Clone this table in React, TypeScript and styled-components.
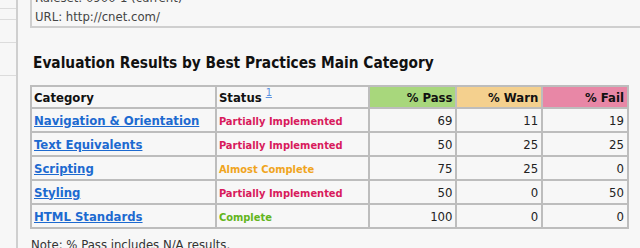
import React from "react";
import styled, { createGlobalStyle } from "styled-components";

const FONT = `"DejaVu Sans Condensed", "DejaVu Sans", "Liberation Sans", sans-serif`;

const GlobalStyle = createGlobalStyle`
  html, body {
    margin: 0;
    padding: 0;
    background: #f7f7f7;
    overflow: hidden;
  }
  body {
    font-family: ${FONT};
    font-size: 13px;
    color: #222;
  }
`;

type Status = "partial" | "almost" | "complete";

interface Row {
  name: string;
  status: Status;
  pass: number;
  warn: number;
  fail: number;
}

const rows: Row[] = [
  { name: "Navigation & Orientation", status: "partial", pass: 69, warn: 11, fail: 19 },
  { name: "Text Equivalents", status: "partial", pass: 50, warn: 25, fail: 25 },
  { name: "Scripting", status: "almost", pass: 75, warn: 25, fail: 0 },
  { name: "Styling", status: "partial", pass: 50, warn: 0, fail: 50 },
  { name: "HTML Standards", status: "complete", pass: 100, warn: 0, fail: 0 },
];

const statusLabel: Record<Status, string> = {
  partial: "Partially Implemented",
  almost: "Almost Complete",
  complete: "Complete",
};

const statusColor: Record<Status, string> = {
  partial: "#d81b5c",
  almost: "#f0a51e",
  complete: "#63b51c",
};

const headColors = {
  pass: "#a8d77c",
  warn: "#f4d08e",
  fail: "#e887a6",
};

/** ===========================================================================
 * Layout
 * ============================================================================
 */

const Page = styled.div`
  display: flex;
  flex-direction: row;
  height: 248px;
  overflow: hidden;
`;

const Sidebar = styled.aside`
  width: 16px;
  flex-shrink: 0;
  border-right: 2px solid #cfcfcf;
  display: flex;
  flex-direction: column;
`;

const SideItem = styled.div<{ $h: number }>`
  height: ${(p) => p.$h}px;
  border-bottom: 1px solid #dcdcdc;
  box-sizing: border-box;
`;

const Main = styled.main`
  flex: 1;
  margin-left: 12px;
  margin-top: -12px;
`;

const InfoBox = styled.div`
  border-left: 2px solid #cfcfcf;
  border-bottom: 2px solid #cfcfcf;
  padding: 0 0 0 3px;
  color: #444;
  line-height: 19px;
`;

const Heading = styled.h2`
  margin: 25px 0 0 3px;
  font-size: 15.3px;
  font-weight: bold;
  color: #111;
  line-height: 20px;
`;

const Table = styled.table`
  margin-top: 12px;
  border-collapse: separate;
  border-spacing: 0;
  border: 1px solid #bdbdbd;
  width: 599px;
`;

const HeadCell = styled.th<{ $bg?: string; $w: number; $right?: boolean }>`
  width: ${(p) => p.$w}px;
  height: 22px;
  padding: 0 3px 0 2px;
  border: 1px solid #bdbdbd;
  background: ${(p) => p.$bg || "transparent"};
  text-align: ${(p) => (p.$right ? "right" : "left")};
  font-size: 13px;
  font-weight: bold;
  color: #111;
  white-space: nowrap;
  box-sizing: border-box;
`;

const Cell = styled.td<{ $right?: boolean }>`
  height: 22px;
  padding: 0 3px 0 2px;
  border: 1px solid #bdbdbd;
  text-align: ${(p) => (p.$right ? "right" : "left")};
  font-size: 13px;
  color: #222;
  white-space: nowrap;
`;

const CategoryLink = styled.a`
  color: #1d6ad0;
  font-weight: bold;
  text-decoration: underline;
`;

const StatusText = styled.span<{ $status: Status }>`
  color: ${(p) => statusColor[p.$status]};
  font-weight: bold;
  font-size: 11px;
`;

const Footnote = styled.sup`
  font-size: 11px;
  font-weight: normal;
  margin-left: 4px;
  line-height: 0;

  a {
    color: #5b92e0;
  }
`;

const Note = styled.p`
  margin: 8px 0 0 1px;
  color: #333;
`;

export default function App() {
  return (
    <>
      <GlobalStyle />
      <Page>
        <Sidebar>
          <SideItem $h={9} />
          <SideItem $h={11} />
          <SideItem $h={23} />
          <SideItem $h={33} />
        </Sidebar>
        <Main>
          <InfoBox>
            <div>Ruleset: 0900-1 (current)</div>
            <div>URL: http://cnet.com/</div>
          </InfoBox>
          <Heading>Evaluation Results by Best Practices Main Category</Heading>
          <Table>
            <thead>
              <tr>
                <HeadCell $w={185}>Category</HeadCell>
                <HeadCell $w={153}>
                  Status
                  <Footnote>
                    <a href="#note1">1</a>
                  </Footnote>
                </HeadCell>
                <HeadCell $w={88} $bg={headColors.pass} $right>
                  % Pass
                </HeadCell>
                <HeadCell $w={86} $bg={headColors.warn} $right>
                  % Warn
                </HeadCell>
                <HeadCell $w={86} $bg={headColors.fail} $right>
                  % Fail
                </HeadCell>
              </tr>
            </thead>
            <tbody>
              {rows.map((r) => (
                <tr key={r.name}>
                  <Cell>
                    <CategoryLink href="#">{r.name}</CategoryLink>
                  </Cell>
                  <Cell>
                    <StatusText $status={r.status}>{statusLabel[r.status]}</StatusText>
                  </Cell>
                  <Cell $right>{r.pass}</Cell>
                  <Cell $right>{r.warn}</Cell>
                  <Cell $right>{r.fail}</Cell>
                </tr>
              ))}
            </tbody>
          </Table>
          <Note>Note: % Pass includes N/A results.</Note>
        </Main>
      </Page>
    </>
  );
}
